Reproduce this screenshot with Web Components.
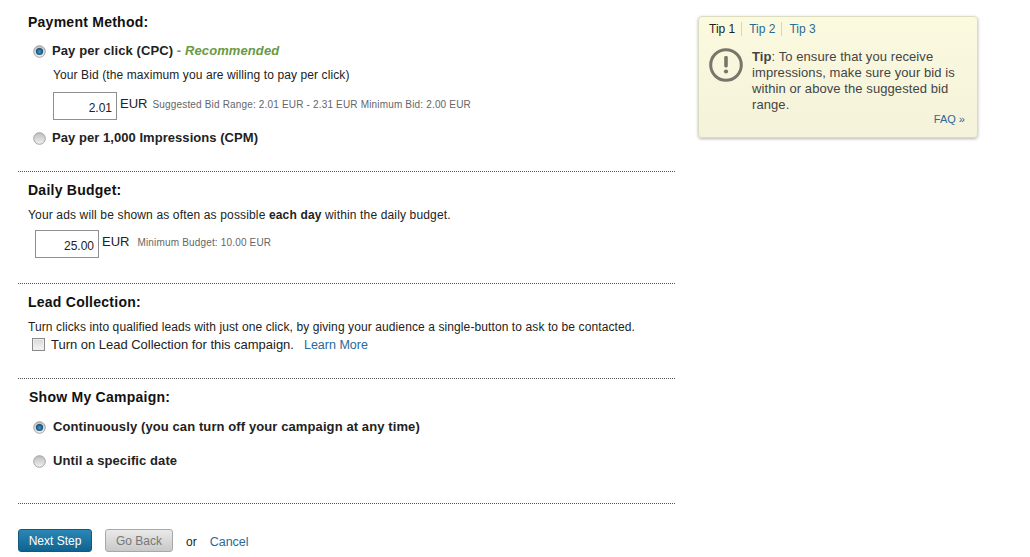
<!DOCTYPE html>
<html>
<head>
<meta charset="utf-8">
<title>Campaign budget</title>
<style>
  html, body { margin: 0; padding: 0; background: #fff; }
  body { font-family: "Liberation Sans", Arial, sans-serif; color: #222; }
  .page { display: flex; align-items: flex-start; width: 1030px; height: 557px; overflow: hidden; }
</style>
</head>
<body>
<div class="page">
  <campaign-form>
    <form-section heading="Payment Method:" style="--head-top:14px; --body-top:13px; height:172px">
      <radio-option checked style="--gap:6px; --track:0.1px">Pay per click (CPC) <span style="color:#6a9a45"><b>- <i>Recommended</i></b></span></radio-option>
      <plain-note style="margin:9px 0 0 25px">Your Bid (the maximum you are willing to pay per click)</plain-note>
      <amount-field value="2.01" hint="Suggested Bid Range: 2.01 EUR - 2.31 EUR Minimum Bid: 2.00 EUR" style="margin:10px 0 0 25px; --hint-gap:5px"></amount-field>
      <radio-option style="margin-top:10px; --gap:6px; --track:0.05px">Pay per 1,000 Impressions (CPM)</radio-option>
    </form-section>
    <form-section heading="Daily Budget:" style="--head-top:10px; --body-top:10px; height:112px">
      <plain-note style="--track:0.15px">Your ads will be shown as often as possible <b>each day</b> within the daily budget.</plain-note>
      <amount-field value="25.00" hint="Minimum Budget: 10.00 EUR" style="margin:8px 0 0 7px; --hint-gap:8px"></amount-field>
    </form-section>
    <form-section heading="Lead Collection:" style="--head-top:10px; --body-top:10px; height:95px">
      <plain-note>Turn clicks into qualified leads with just one click, by giving your audience a single-button to ask to be contacted.</plain-note>
      <check-option link="Learn More">Turn on Lead Collection for this campaign.</check-option>
    </form-section>
    <form-section heading="Show My Campaign:" style="--head-top:10px; --body-top:14px; --head-left:1px; height:125px">
      <radio-option checked>Continuously (you can turn off your campaign at any time)</radio-option>
      <radio-option style="margin-top:18px">Until a specific date</radio-option>
    </form-section>
    <action-bar></action-bar>
  </campaign-form>
  <tip-box></tip-box>
</div>

<script>
class CampaignForm extends HTMLElement {
  constructor() {
    super();
    this.attachShadow({ mode: "open" }).innerHTML = `
      <style>
        :host { display: block; width: 657px; margin-left: 18px; flex: none; }
      </style>
      <slot></slot>
    `;
  }
}

class FormSection extends HTMLElement {
  constructor() {
    super();
    this.attachShadow({ mode: "open" });
  }

  connectedCallback() {
    this.shadowRoot.innerHTML = `
      <style>
        :host {
          display: block;
          box-sizing: border-box;
          padding-left: 10px;
          border-bottom: 1px dotted #555;
        }
        h2 {
          margin: 0;
          padding-top: var(--head-top, 10px);
          padding-left: var(--head-left, 0);
          font-size: 14px;
          line-height: 16px;
          font-weight: bold;
          letter-spacing: 0.25px;
          color: #111;
        }
        .body { padding-top: var(--body-top, 10px); }
      </style>
      <h2>${this.getAttribute("heading") || ""}</h2>
      <div class="body"><slot></slot></div>
    `;
  }
}

class RadioOption extends HTMLElement {
  constructor() {
    super();
    this.attachShadow({ mode: "open" });
  }

  connectedCallback() {
    const dot = this.hasAttribute("checked")
      ? `<circle cx="6.5" cy="6.5" r="3.6" fill="url(#on)"/>`
      : "";
    this.shadowRoot.innerHTML = `
      <style>
        :host {
          display: flex;
          align-items: center;
          gap: var(--gap, 7px);
          margin-left: 5px;
          font-size: 13px;
          line-height: 16px;
          font-weight: bold;
          color: #222;
          letter-spacing: var(--track, 0.1px);
        }
        svg { width: 13px; height: 13px; flex: none; }
      </style>
      <svg viewBox="0 0 13 13">
        <defs>
          <linearGradient id="off" x1="0" y1="0" x2="0" y2="1">
            <stop offset="0" stop-color="#bdbdbd"/>
            <stop offset="1" stop-color="#f2f2f2"/>
          </linearGradient>
          <radialGradient id="on" cx="0.5" cy="0.55" r="0.6">
            <stop offset="0" stop-color="#3f9ad6"/>
            <stop offset="1" stop-color="#0d3a5a"/>
          </radialGradient>
        </defs>
        <circle cx="6.5" cy="6.5" r="5.8" fill="url(#off)" stroke="#9a9a9a" stroke-width="0.9"/>
        ${dot}
      </svg>
      <span><slot></slot></span>
    `;
  }
}

class PlainNote extends HTMLElement {
  constructor() {
    super();
    this.attachShadow({ mode: "open" }).innerHTML = `
      <style>
        :host {
          display: block;
          font-size: 12px;
          line-height: 14px;
          letter-spacing: var(--track, 0.1px);
          color: #222;
        }
      </style>
      <slot></slot>
    `;
  }
}

class AmountField extends HTMLElement {
  constructor() {
    super();
    this.attachShadow({ mode: "open" });
  }

  connectedCallback() {
    this.shadowRoot.innerHTML = `
      <style>
        :host { display: flex; align-items: flex-start; }
        .box {
          box-sizing: border-box;
          width: 64px;
          height: 28px;
          padding: 7px 4px 0 0;
          border: 1px solid #8f8f8f;
          background: #fff;
          font-size: 12px;
          line-height: 16px;
          text-align: right;
          color: #222;
        }
        .unit { margin: 4px 0 0 3px; font-size: 13px; line-height: 16px; color: #222; }
        .hint {
          margin: 6px 0 0 var(--hint-gap, 5px);
          font-size: 10px;
          line-height: 13px;
          letter-spacing: 0.17px;
          color: #666;
        }
      </style>
      <div class="box">${this.getAttribute("value")}</div>
      <span class="unit">EUR</span>
      <span class="hint">${this.getAttribute("hint")}</span>
    `;
  }
}

class CheckOption extends HTMLElement {
  constructor() {
    super();
    this.attachShadow({ mode: "open" });
  }

  connectedCallback() {
    this.shadowRoot.innerHTML = `
      <style>
        :host {
          display: flex;
          align-items: flex-start;
          margin: 3px 0 0 4px;
          font-size: 13px;
          line-height: 16px;
          letter-spacing: -0.02px;
          color: #222;
        }
        .tick {
          box-sizing: border-box;
          width: 13px;
          height: 13px;
          margin: 1px 6px 0 0;
          border: 1px solid #8a8a8a;
          background: linear-gradient(#d8d8d8, #f6f6f6);
          box-shadow: inset 0 0 0 1px #eee;
        }
        a { margin-left: 10px; font-size: 12.5px; letter-spacing: 0; color: #2a6a96; text-decoration: none; }
      </style>
      <span class="tick"></span>
      <span><slot></slot></span>
      <a href="#">${this.getAttribute("link")}</a>
    `;
  }
}

class ActionBar extends HTMLElement {
  constructor() {
    super();
    this.attachShadow({ mode: "open" }).innerHTML = `
      <style>
        :host {
          display: flex;
          align-items: center;
          padding-top: 25px;
          font-size: 12px;
          color: #222;
        }
        .btn {
          box-sizing: border-box;
          height: 23px;
          padding-top: 1px;
          line-height: 20px;
          border-radius: 3px;
          text-align: center;
        }
        .next {
          width: 74px;
          background: linear-gradient(#2b87b5, #0f6391);
          border: 1px solid #15597f;
          color: #fff;
        }
        .back {
          width: 68px;
          margin-left: 13px;
          background: linear-gradient(#e9e9e9, #c9c9c9);
          border: 1px solid #a8a8a8;
          color: #777;
        }
        .or { margin-left: 13px; padding-top: 2px; }
        a { margin-left: 13px; padding-top: 2px; font-size: 12.5px; color: #2a6a96; text-decoration: none; }
      </style>
      <div class="btn next">Next Step</div>
      <div class="btn back">Go Back</div>
      <span class="or">or</span>
      <a href="#">Cancel</a>
    `;
  }
}

class TipBox extends HTMLElement {
  constructor() {
    super();
    this.attachShadow({ mode: "open" }).innerHTML = `
      <style>
        :host {
          display: block;
          box-sizing: border-box;
          flex: none;
          width: 280px;
          height: 122px;
          margin: 16px 0 0 23px;
          padding: 5px 11px 0 10px;
          border: 1px solid #dcdcc0;
          border-radius: 4px;
          background: linear-gradient(#fbfadf, #f4f2da);
          box-shadow: 0 1px 3px rgba(0, 0, 0, 0.3);
          font-size: 12px;
          color: #444;
        }
        .tabs { display: flex; line-height: 14px; }
        .tabs span, .tabs a { padding: 0 6px 0 7px; border-left: 1px solid #d8d6b8; text-decoration: none; color: #2a6a96; }
        .tabs span { padding-left: 0; border-left: 0; color: #222; }
        .main { display: flex; margin-top: 13px; }
        svg { width: 34px; height: 34px; flex: none; margin: -1px 9px 0 0; }
        p { margin: 0; font-size: 13px; line-height: 16px; letter-spacing: 0.08px; }
        .faq { display: block; font-size: 11px; line-height: 13px; text-align: right; padding-right: 1px; color: #2a6a96; text-decoration: none; }
      </style>
      <div class="tabs"><span>Tip 1</span><a href="#">Tip 2</a><a href="#">Tip 3</a></div>
      <div class="main">
        <svg viewBox="0 0 34 34">
          <circle cx="17" cy="17" r="15.3" fill="none" stroke="#78766a" stroke-width="3"/>
          <rect x="15.2" y="8" width="3.6" height="11.5" rx="1.4" fill="#78766a"/>
          <circle cx="17" cy="23.5" r="2.1" fill="#78766a"/>
        </svg>
        <p><b>Tip</b>: To ensure that you receive impressions, make sure your bid is within or above the suggested bid range.</p>
      </div>
      <a class="faq" href="#">FAQ »</a>
    `;
  }
}

customElements.define("campaign-form", CampaignForm);
customElements.define("form-section", FormSection);
customElements.define("radio-option", RadioOption);
customElements.define("plain-note", PlainNote);
customElements.define("amount-field", AmountField);
customElements.define("check-option", CheckOption);
customElements.define("action-bar", ActionBar);
customElements.define("tip-box", TipBox);
</script>
</body>
</html>
